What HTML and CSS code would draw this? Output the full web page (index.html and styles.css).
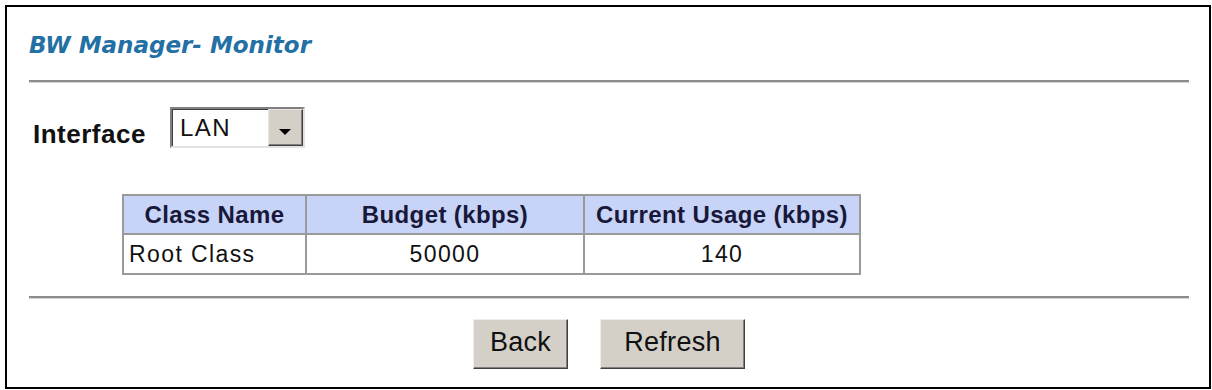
FILE: index.html
```html
<!DOCTYPE html>
<html>
<head>
<title>BW Manager- Monitor</title>
<link rel="stylesheet" href="styles.css">
</head>
<body>
<div class="panel">
	<h1 class="title">BW Manager- Monitor</h1>
	<hr class="rule">

	<div class="iface">
		<span class="iface-label">Interface</span>
		<div class="select">
			<span class="select-value">LAN</span>
			<span class="select-arrow"><span class="tri"></span></span>
		</div>
	</div>

	<table class="usage">
		<tr>
			<th class="c-name">Class Name</th>
			<th class="c-budget">Budget (kbps)</th>
			<th class="c-usage">Current Usage (kbps)</th>
		</tr>
		<tr>
			<td class="left">Root Class</td>
			<td>50000</td>
			<td>140</td>
		</tr>
	</table>

	<hr class="rule">

	<div class="actions">
		<button class="bttn bttn-back" type="button">Back</button>
		<button class="bttn bttn-refresh" type="button">Refresh</button>
	</div>
</div>
</body>
</html>
```

FILE: styles.css
```css
body {margin: 0;background: #fff;font-family: "Liberation Sans", Arial, sans-serif;}

.panel {box-sizing: border-box;height: 384px;margin: 5px 1px 0 5px;border: 2px solid #000;padding: 0 20px 0 22px;}

.title {margin: 25px 0 0 0;font-family: "DejaVu Sans", Verdana, sans-serif;font-size: 23px;line-height: 27px;font-weight: bold;font-style: italic;color: #2370a5;}

.rule {height: 0;margin: 21px 0 0 0;border: 0;border-top: 2px solid #8c8c8c;border-bottom: 1px solid #d2d2d2;}

/* interface picker */
.iface {display: flex;align-items: flex-end;margin-top: 24px;}
.iface-label {margin-left: 4px;font-size: 26px;line-height: 30px;font-weight: bold;letter-spacing: 0.5px;color: #111;}
.select {display: flex;box-sizing: border-box;width: 135px;height: 41px;margin-left: 24px;margin-bottom: 1px;border: 2px solid;border-color: #808080 #e4e2de #e4e2de #808080;box-shadow: inset 1px 1px 0 #404040;background: #fff;}
.select-value {flex: 1;padding: 2px 0 0 8px;font-size: 24px;line-height: 34px;letter-spacing: 1.5px;color: #111;}
.select-arrow {display: flex;align-items: center;justify-content: center;box-sizing: border-box;width: 35px;padding-top: 8px;background: #d4d0c8;border: 1px solid;border-color: #e8e6e2 #404040 #404040 #e8e6e2;box-shadow: inset -1px -1px 0 #808080;}
.tri {width: 0;height: 0;border-left: 6px solid transparent;border-right: 6px solid transparent;border-top: 6px solid #000;}

/* usage table */
.usage {width: 739px;margin: 45px 0 0 93px;border-collapse: collapse;}
.usage th, .usage td {border: 2px solid #9a9a9a;padding: 0;text-align: center;}
.usage th {height: 37px;background: #c8d4f7;font-size: 24px;letter-spacing: 0.4px;color: #18183a;}
.usage td {height: 38px;font-size: 23px;letter-spacing: 1.4px;color: #111;}
.usage td.left {text-align: left;padding-left: 5px;}
.c-name {width: 181px;}
.c-budget {width: 276px;}

.usage + .rule {margin-top: 21px;}

/* buttons */
.actions {display: flex;justify-content: center;gap: 32px;margin-top: 20px;}
.bttn {box-sizing: border-box;height: 50px;padding: 0 0 3px 0;background: #d4d0c8;border: 1px solid;border-color: #eeece8 #404040 #404040 #eeece8;box-shadow: inset -1px -1px 0 #808080;font-family: "Liberation Sans", Arial, sans-serif;font-size: 27px;letter-spacing: 0.3px;color: #111;}
.bttn-back {width: 95px;}
.bttn-refresh {width: 145px;}
```
